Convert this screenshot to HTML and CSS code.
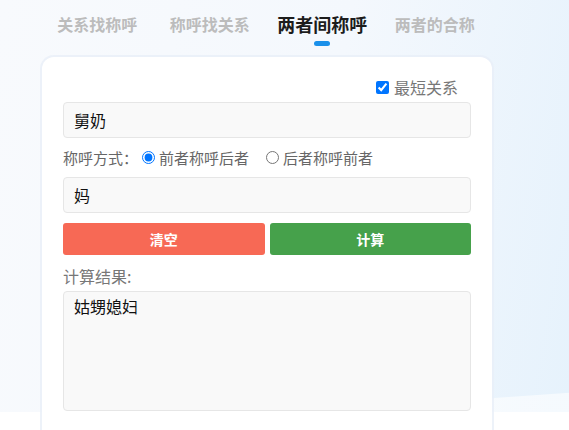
FILE: index.html
```html
<!DOCTYPE html>
<html lang="zh">
<head>
<meta charset="utf-8">
<link rel="stylesheet" href="styles.css">
</head>
<body>
<div class="page">
  <nav class="tabs">
    <div class="tab">关系找称呼</div>
    <div class="tab">称呼找关系</div>
    <div class="tab active">两者间称呼<span class="bar"></span></div>
    <div class="tab">两者的合称</div>
  </nav>
  <main class="card">
    <div class="opt-row">
      <label class="check"><input type="checkbox" checked><span>最短关系</span></label>
    </div>
    <div class="field">舅奶</div>
    <div class="mode-row">
      <span class="mode-label">称呼方式：</span>
      <label class="radio"><input type="radio" name="m" checked><span>前者称呼后者</span></label>
      <label class="radio"><input type="radio" name="m"><span>后者称呼前者</span></label>
    </div>
    <div class="field">妈</div>
    <div class="btns">
      <button class="btn clear">清空</button>
      <button class="btn calc">计算</button>
    </div>
    <div class="result-label">计算结果:</div>
    <div class="result">姑甥媳妇</div>
  </main>
</div>
</body>
</html>
```
FILE: styles.css
```css
html, body {
  margin: 0;
  padding: 0;
}
body {
  width: 569px;
  height: 430px;
  overflow: hidden;
  font-family: "Noto Sans CJK SC", "Noto Sans", sans-serif;
  background:
    linear-gradient(176deg, transparent 0, transparent 431px, rgba(255,255,255,0.6) 432px) 0 0 / 100% 412px no-repeat,
    linear-gradient(100deg, #f8fafd 0%, #f4f8fd 55%, #e6f2fc 100%) 0 0 / 100% 412px no-repeat,
    #ffffff;
}
.page {
  padding-top: 10px;
}
.tabs {
  display: grid;
  grid-template-columns: repeat(4, 1fr);
  width: 450px;
  margin-left: 41px;
  height: 47px;
}
.tab {
  position: relative;
  text-align: center;
  font-size: 16px;
  font-weight: 700;
  color: #bcbcbc;
  line-height: 28px;
}
.tab.active {
  font-size: 18px;
  color: #1c1c1c;
}
.tab .bar {
  position: absolute;
  left: 50%;
  top: 31px;
  width: 16px;
  height: 5px;
  margin-left: -8px;
  border-radius: 3px;
  background: #1a90ea;
}
.card {
  margin-left: 42px;
  width: 450px;
  height: 400px;
  box-sizing: border-box;
  background: #fff;
  border-radius: 12px;
  box-shadow: 0 0 0 2px rgba(232, 239, 248, 0.8);
  padding: 18px 21px 0 21px;
}
.opt-row {
  display: flex;
  justify-content: flex-end;
  padding-right: 13px;
  height: 24px;
  align-items: center;
  margin-bottom: 3px;
}
.check {
  display: flex;
  align-items: center;
  font-size: 16px;
  color: #777;
}
.check input {
  width: 13px;
  height: 13px;
  margin: 0 5px 0 0;
}
.field {
  height: 36px;
  box-sizing: border-box;
  border: 1px solid #e6e6e6;
  border-radius: 4px;
  background: #f9f9f9;
  padding: 0 10px;
  font-size: 16px;
  line-height: 34px;
  color: #111;
}
.mode-row {
  display: flex;
  align-items: center;
  height: 39px;
  font-size: 15px;
  color: #666;
}
.mode-label {
  margin-right: 4px;
  font-size: 15px;
}
.radio {
  display: flex;
  align-items: center;
  margin-right: 17px;
}
.radio input {
  width: 13px;
  height: 13px;
  margin: 0 4px 0 0;
}
.btns {
  display: flex;
  gap: 5px;
  margin-top: 10px;
}
.btn {
  flex: 1;
  height: 32px;
  border: none;
  border-radius: 3px;
  color: #fff;
  font-family: inherit;
  font-size: 14px;
  font-weight: 700;
}
.btn.clear { background: #f76955; }
.btn.calc { background: #46a14b; }
.result-label {
  margin-top: 10px;
  font-size: 16px;
  color: #777;
  line-height: 22px;
}
.result {
  margin-top: 4px;
  height: 120px;
  box-sizing: border-box;
  border: 1px solid #e6e6e6;
  border-radius: 4px;
  background: #f9f9f9;
  padding: 3px 10px;
  font-size: 16px;
  line-height: 22px;
  color: #111;
}
```
